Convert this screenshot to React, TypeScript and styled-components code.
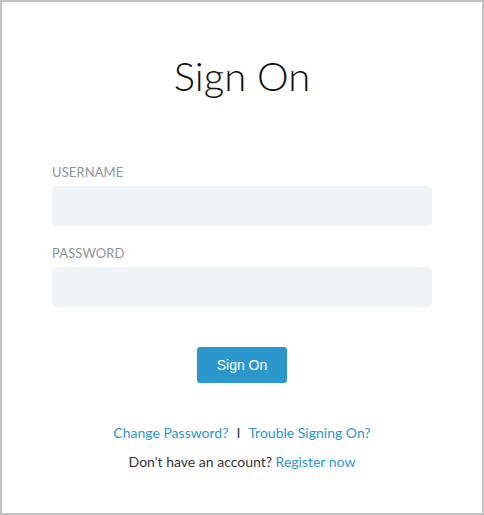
import React from 'react';
import styled, {createGlobalStyle} from 'styled-components';

const GlobalStyle = createGlobalStyle`
  html, body {
    margin: 0;
    padding: 0;
    background: #ffffff;
  }
  * {
    box-sizing: border-box;
  }
`;

const Panel = styled.main`
  width: 484px;
  height: 515px;
  border: 2px solid #c3c3c3;
  background: #ffffff;
  padding: 48px 50px 0;
  font-family: Lato, 'Open Sans', sans-serif;
  display: flex;
  flex-direction: column;
`;

const Title = styled.h1`
  margin: 0 0 63px;
  text-align: center;
  font-size: 40px;
  font-weight: 300;
  line-height: 52px;
  color: #111111;
`;

const Field = styled.label`
  display: flex;
  flex-direction: column;
  gap: 7px;
  margin-bottom: 20px;
`;

const Label = styled.span`
  font-size: 13px;
  line-height: 14px;
  color: #8f969e;
  letter-spacing: 0.1px;
`;

const Input = styled.input`
  height: 40px;
  width: 100%;
  border: none;
  border-radius: 4px;
  background: #f1f4f6;
  padding: 0 12px;
  font: inherit;
  outline: none;
`;

const Actions = styled.div`
  display: flex;
  justify-content: center;
  margin-top: 20px;
`;

const Button = styled.button`
  width: 90px;
  height: 36px;
  border: none;
  border-radius: 3px;
  background: #2b97cd;
  color: #ffffff;
  font-family: 'Liberation Sans', Arial, sans-serif;
  font-size: 14px;
  cursor: pointer;
`;

const Links = styled.p<{$gap?: number}>`
  margin: ${p => p.$gap ?? 0}px 0 0;
  text-align: center;
  font-size: 14px;
  line-height: 20px;
  color: #333333;
`;

const Link = styled.a`
  color: #2b95cc;
  text-decoration: none;
`;

const Divider = styled.span`
  margin: 0 8px;
  color: #333333;
`;

export default function App() {
  return (
    <>
      <GlobalStyle />
      <Panel>
        <Title>Sign On</Title>
        <Field>
          <Label>USERNAME</Label>
          <Input type='text' />
        </Field>
        <Field>
          <Label>PASSWORD</Label>
          <Input type='password' />
        </Field>
        <Actions>
          <Button>Sign On</Button>
        </Actions>
        <Links $gap={40}>
          <Link href='#'>Change Password?</Link>
          <Divider>I</Divider>
          <Link href='#'>Trouble Signing On?</Link>
        </Links>
        <Links $gap={9}>
          Don't have an account? <Link href='#'>Register now</Link>
        </Links>
      </Panel>
    </>
  );
}
